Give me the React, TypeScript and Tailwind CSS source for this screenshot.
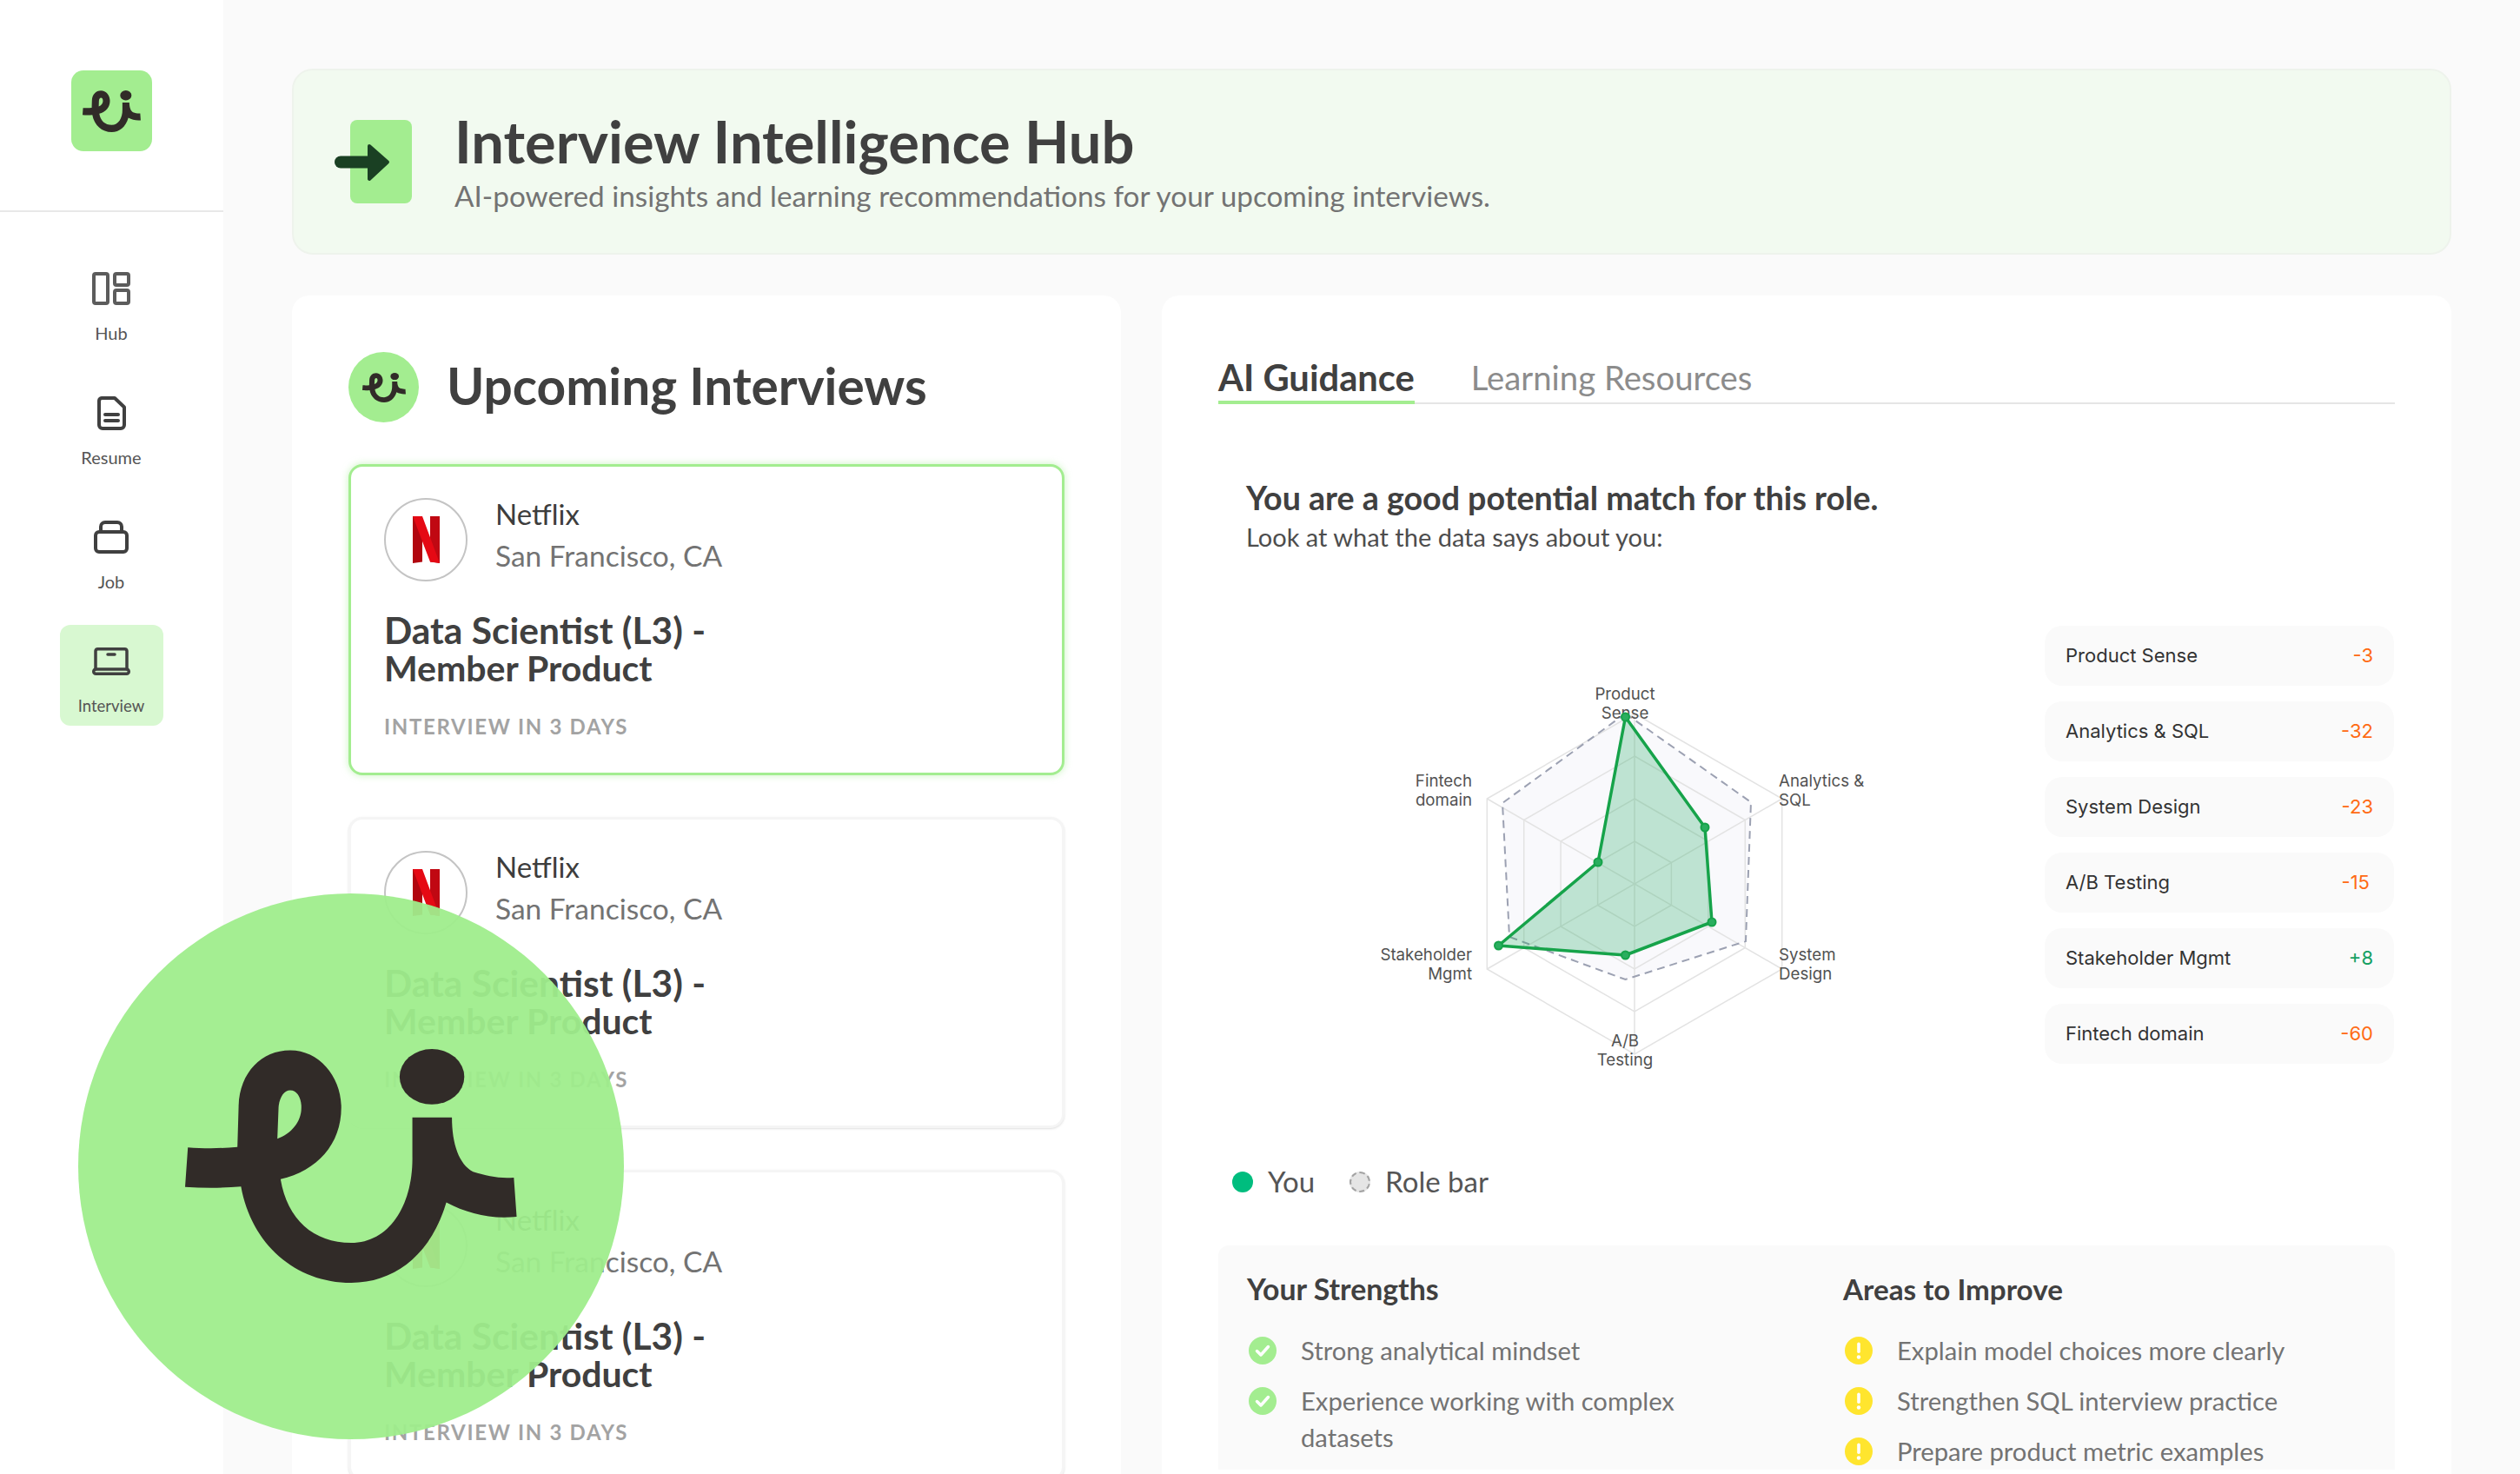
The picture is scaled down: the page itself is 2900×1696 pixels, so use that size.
import React from "react";

const LOGO_BODY =
  "M341 768C380 771 425 771 465 767L468 668C470 585 525 530 597 530C670 530 725 595 725 670C725 760 665 825 573 846C590 945 655 1002 750 1002C845 1002 905 910 903 790L903 695L1002 695C1002 760 1020 810 1055 828C1090 838 1120 845 1157 842L1164 938C1100 945 1040 930 988 903C950 1030 860 1100 750 1100C610 1100 500 1005 474 864C430 868 380 868 334 865ZM565 747C600 735 625 705 625 672C626 648 615 628 597 628C582 628 570 645 568 670Z";

function Logo({ className }: { className: string }) {
  return (
    <svg viewBox="334 527 831 573" preserveAspectRatio="none" className={className}>
      <path d={LOGO_BODY} fill="#312b28" fillRule="evenodd" />
      <ellipse cx="952" cy="595" rx="81" ry="68" fill="#312b28" />
    </svg>
  );
}

function NetflixN() {
  return (
    <svg viewBox="0 0 31 54" className="h-[54px] w-[31px]">
      <path d="M0 0H11V52.5L0 54Z" fill="#b1060f" />
      <path d="M20 0H31V54L20 52.5Z" fill="#c00812" />
      <path d="M0 0H11L31 54C27 53.2 23.5 52.8 20 52.5Z" fill="#e50914" />
    </svg>
  );
}

function HubIcon() {
  return (
    <svg width="44" height="38" viewBox="0 0 44 38" fill="none" stroke="#5c5c5c" strokeWidth="4">
      <rect x="2" y="2" width="16" height="34" rx="2" />
      <rect x="26" y="2" width="16" height="13" rx="2" />
      <rect x="26" y="21" width="16" height="15" rx="2" />
    </svg>
  );
}

function ResumeIcon() {
  return (
    <svg width="33" height="39" viewBox="0 0 33 39" fill="none" stroke="#404040" strokeWidth="4" strokeLinecap="round" strokeLinejoin="round">
      <path d="M5 2H20L31 12.5V33A4 4 0 0 1 27 37H6A4 4 0 0 1 2 33V5A3.5 3.5 0 0 1 5 2Z" />
      <path d="M9 21H24M9 28H24" />
    </svg>
  );
}

function JobIcon() {
  return (
    <svg width="40" height="38" viewBox="0 0 40 38" fill="none" stroke="#404040" strokeWidth="4" strokeLinejoin="round">
      <rect x="2" y="13" width="36" height="23" rx="4" />
      <path d="M8 13V7A5 5 0 0 1 13 2H27A5 5 0 0 1 32 7V13" />
    </svg>
  );
}

function LaptopIcon() {
  return (
    <svg width="44" height="32" viewBox="0 0 44 32" fill="none" stroke="#404040" strokeWidth="3.5" strokeLinejoin="round" strokeLinecap="round">
      <path d="M4 25V4A2.5 2.5 0 0 1 6.5 1.75H37.5A2.5 2.5 0 0 1 40 4V25" />
      <rect x="1.75" y="25" width="40.5" height="5.25" rx="2.5" />
      <path d="M18 8H26" />
    </svg>
  );
}

function NavItem({ label, icon, active }: { label: string; icon: React.ReactNode; active?: boolean }) {
  return (
    <div className={"flex h-[116px] w-[119px] flex-col items-center rounded-xl pt-[18px] " + (active ? "bg-[#d8f8d1]" : "")}>
      <div className="flex h-12 items-center justify-center">{icon}</div>
      <span className={"mt-[13px] leading-7 text-[#555555] " + (active ? "text-[18.5px]" : "text-[20px]")}>{label}</span>
    </div>
  );
}

function InterviewCard({ selected }: { selected?: boolean }) {
  return (
    <div
      className={
        "flex h-[358px] shrink-0 flex-col rounded-[16px] bg-white px-[38px] pt-[36px] " +
        (selected ? "border-[3px] border-[#a3ed90] shadow-[0_0_8px_rgba(165,237,150,0.6)]" : "border-[3px] border-[#f5f5f5] shadow-sm")
      }
    >
      <div className="flex items-center gap-[32px]">
        <div className="flex h-[96px] w-[96px] shrink-0 items-center justify-center rounded-full border-2 border-[#c4c4c4]">
          <NetflixN />
        </div>
        <div className="-mt-[12px]">
          <div className="text-[33px] leading-[48px] text-[#3d3d3d]">Netflix</div>
          <div className="text-[33.5px] leading-[48px] text-[#737373]">San Francisco, CA</div>
        </div>
      </div>
      <div className="mt-[34px] font-bold leading-[44px] text-[#404040]">
        <div className="text-[42.5px]">Data Scientist (L3) -</div>
        <div className="text-[41px]">Member Product</div>
      </div>
      <div className="mt-[29px] text-[24px] font-bold leading-8 tracking-[0.07em] text-[#a3a3a3]">INTERVIEW IN 3 DAYS</div>
    </div>
  );
}

const CX = 1881;
const CY = 1017;
const RADII = [49, 98, 147, 196];

function ringPoints(r: number) {
  return [0, 1, 2, 3, 4, 5]
    .map((i) => {
      const a = ((-90 + 60 * i) * Math.PI) / 180;
      return `${(CX + r * Math.cos(a)).toFixed(1)},${(CY + r * Math.sin(a)).toFixed(1)}`;
    })
    .join(" ");
}

const YOU = [
  [1870.5, 825],
  [1962, 952],
  [1970, 1061],
  [1870.5, 1099],
  [1724.5, 1088],
  [1839, 992],
];
const ROLE = "1870.5,821 2015,923 2009,1083 1870.5,1127 1737,1078 1729,924";

const AXIS_LABELS: { x: number; y: number; anchor: "start" | "middle" | "end"; lines: string[] }[] = [
  { x: 1870, y: 798, anchor: "middle", lines: ["Product", "Sense"] },
  { x: 2047, y: 898, anchor: "start", lines: ["Analytics &", "SQL"] },
  { x: 2047, y: 1098, anchor: "start", lines: ["System", "Design"] },
  { x: 1870, y: 1197, anchor: "middle", lines: ["A/B", "Testing"] },
  { x: 1694, y: 1098, anchor: "end", lines: ["Stakeholder", "Mgmt"] },
  { x: 1694, y: 898, anchor: "end", lines: ["Fintech", "domain"] },
];

function RadarChart() {
  return (
    <svg viewBox="1402 719 951 540" className="h-[540px] w-[951px] shrink-0">
      <polygon points={ROLE} fill="#f9f9fc" />
      {RADII.map((r) => (
        <polygon key={r} points={ringPoints(r)} fill="none" stroke="#e3e3e3" strokeWidth="1.5" />
      ))}
      {[0, 1, 2].map((i) => {
        const a = ((-90 + 60 * i) * Math.PI) / 180;
        return (
          <line
            key={i}
            x1={CX - 196 * Math.cos(a)}
            y1={CY - 196 * Math.sin(a)}
            x2={CX + 196 * Math.cos(a)}
            y2={CY + 196 * Math.sin(a)}
            stroke="#e3e3e3"
            strokeWidth="1.5"
          />
        );
      })}
      <polygon points={ROLE} fill="none" stroke="#9ca1b2" strokeWidth="2" strokeDasharray="9 6" />
      {AXIS_LABELS.map((l) =>
        l.lines.map((t, i) => (
          <text
            key={t}
            x={l.x}
            y={l.y + i * 22 + 7}
            textAnchor={l.anchor}
            fontSize="18.7"
            fill="#525252"
            fontFamily="Inter, sans-serif"
          >
            {t}
          </text>
        )),
      )}
      <polygon points={YOU.map((p) => p.join(",")).join(" ")} fill="#10a555" fillOpacity="0.25" stroke="#16a34a" strokeWidth="3.5" strokeLinejoin="round" />
      {YOU.map((p) => (
        <circle key={p[0] + "-" + p[1]} cx={p[0]} cy={p[1]} r="4.5" fill="#2aae5f" stroke="#16a34a" strokeWidth="2" />
      ))}
    </svg>
  );
}

const METRICS = [
  { name: "Product Sense", value: "-3", color: "text-[#ff6a13]", extra: "" },
  { name: "Analytics & SQL", value: "-32", color: "text-[#ff6a13]", extra: "" },
  { name: "System Design", value: "-23", color: "text-[#ff6a13]", extra: "" },
  { name: "A/B Testing", value: "-15", color: "text-[#ff6a13]", extra: "pr-[4px]" },
  { name: "Stakeholder Mgmt", value: "+8", color: "text-[#16a063]", extra: "" },
  { name: "Fintech domain", value: "-60", color: "text-[#ff6a13]", extra: "" },
];

function CheckIcon() {
  return (
    <svg width="32" height="32" viewBox="0 0 32 32" className="shrink-0">
      <circle cx="16" cy="16" r="16" fill="#a3ed90" />
      <path d="M9.5 16.5L14 21L22.5 11.5" fill="none" stroke="#ffffff" strokeWidth="3.5" strokeLinecap="round" strokeLinejoin="round" />
    </svg>
  );
}

function WarnIcon() {
  return (
    <svg width="32" height="32" viewBox="0 0 32 32" className="shrink-0">
      <circle cx="16" cy="16" r="16" fill="#ffe52e" />
      <rect x="14.2" y="6.5" width="3.6" height="12.5" rx="1.8" fill="#ffffff" />
      <circle cx="16" cy="23.5" r="2.2" fill="#ffffff" />
    </svg>
  );
}

function ListItem({ icon, text }: { icon: React.ReactNode; text: string }) {
  return (
    <div className="flex gap-[28px]">
      <div className="flex h-[42px] items-center">{icon}</div>
      <span className="max-w-[480px] text-[29.2px] leading-[42px] text-[#737373]">{text}</span>
    </div>
  );
}

export default function App() {
  return (
    <div className="relative flex h-[1696px] w-[2900px] overflow-hidden bg-[#fafafa] font-['Lato',sans-serif]">
      <aside className="flex w-[257px] shrink-0 flex-col bg-white">
        <div className="flex h-[244px] items-start justify-center border-b-2 border-[#e8e8e8] pt-[81px]">
          <div className="flex h-[93px] w-[93px] items-center justify-center rounded-[14px] bg-[#a3ed90]">
            <Logo className="h-[48px] w-[67px]" />
          </div>
        </div>
        <nav className="flex flex-col items-center gap-[27px] pr-[1px] pt-[46px]">
          <NavItem label="Hub" icon={<HubIcon />} />
          <NavItem label="Resume" icon={<ResumeIcon />} />
          <NavItem label="Job" icon={<JobIcon />} />
          <NavItem label="Interview" icon={<LaptopIcon />} active />
        </nav>
      </aside>

      <main className="flex min-w-0 flex-1 flex-col px-[79px] pt-[79px]">
        <header className="flex h-[214px] shrink-0 items-center rounded-[24px] border-2 border-[#eef3ec] bg-[#f2faf0] pl-[65px]">
          <div className="relative h-[96px] w-[71px] rounded-[8px] bg-[#a3ed90]">
            <svg width="64" height="44" viewBox="0 0 64 44" className="absolute left-[-18px] top-[27px]">
              <path d="M7 21.5H40" stroke="#1a4023" strokeWidth="14" strokeLinecap="round" />
              <path d="M40 3L61 21.5L40 41Z" fill="#1a4023" stroke="#1a4023" strokeWidth="4" strokeLinejoin="round" />
            </svg>
          </div>
          <div className="ml-[49px] mb-[2px]">
            <h1 className="text-[66.8px] font-bold leading-[76px] text-[#404040]">Interview Intelligence Hub</h1>
            <p className="mt-[4px] text-[33.3px] leading-[42px] text-[#737373]">AI-powered insights and learning recommendations for your upcoming interviews.</p>
          </div>
        </header>

        <div className="mt-[47px] flex min-h-0 flex-1 gap-[47px]">
          <section className="flex w-[954px] shrink-0 flex-col rounded-t-[20px] bg-white px-[65px] pt-[65px]">
            <div className="flex items-center gap-[32px]">
              <div className="flex h-[81px] w-[81px] items-center justify-center rounded-full bg-[#a3ed90]">
                <Logo className="h-[34px] w-[50px]" />
              </div>
              <h2 className="mb-[5px] text-[58.6px] font-bold leading-[76px] text-[#404040]">Upcoming Interviews</h2>
            </div>
            <div className="mt-[48px] flex flex-col gap-[48px]">
              <InterviewCard selected />
              <InterviewCard />
              <InterviewCard />
            </div>
          </section>

          <section className="flex min-w-0 flex-1 flex-col rounded-t-[20px] bg-white px-[65px] pt-[65px]">
            <div className="flex h-[60px] shrink-0 gap-[65px] border-b-2 border-[#e5e5e5]">
              <div className="-mb-[2px] h-[60px] border-b-4 border-[#a3ed90] text-[41.7px] font-bold leading-[58px] text-[#404040]">AI Guidance</div>
              <div className="text-[38.3px] leading-[58px] text-[#8c8c8c]">Learning Resources</div>
            </div>

            <div className="mt-[86px] pl-[32px]">
              <h3 className="text-[37.6px] font-bold leading-[44px] text-[#404040]">You are a good potential match for this role.</h3>
              <p className="mt-[3px] text-[29px] leading-[40px] text-[#4d4d4d]">Look at what the data says about you:</p>
            </div>

            <div className="mt-[81px] flex h-[540px] shrink-0">
              <RadarChart />
              <div className="flex w-[402px] shrink-0 flex-col gap-[18px] pt-[1px] font-['Inter',sans-serif]">
                {METRICS.map((m) => (
                  <div key={m.name} className="flex h-[69px] items-center justify-between rounded-[20px] bg-[#fafafa] px-[24px] text-[22px]">
                    <span className="text-[#333333]">{m.name}</span>
                    <span className={m.color + " " + m.extra}>{m.value}</span>
                  </div>
                ))}
              </div>
            </div>

            <div className="mt-[77px] flex h-[48px] shrink-0 items-center pl-[16px] text-[33px] text-[#555555]">
              <span className="h-[24px] w-[24px] rounded-full bg-[#00bd7e]" />
              <span className="ml-[17px]">You</span>
              <span className="ml-[40px] h-[24px] w-[24px] rounded-full border-2 border-dashed border-[#a3a3a3] bg-[#e5e5e5]" />
              <span className="ml-[17px]">Role bar</span>
            </div>

            <div className="mt-[49px] grid grid-cols-[601px_601px] gap-x-[85px] rounded-t-[12px] bg-[#fafafa] px-[33px] pt-[26px]">
              <div>
                <h4 className="text-[33.8px] font-bold leading-[48px] text-[#404040]">Your Strengths</h4>
                <div className="mt-[26px] flex flex-col gap-[16px] pl-[2px]">
                  <ListItem icon={<CheckIcon />} text="Strong analytical mindset" />
                  <ListItem icon={<CheckIcon />} text="Experience working with complex datasets" />
                </div>
              </div>
              <div>
                <h4 className="text-[33.2px] font-bold leading-[48px] text-[#404040]">Areas to Improve</h4>
                <div className="mt-[26px] flex flex-col gap-[16px] pl-[2px]">
                  <ListItem icon={<WarnIcon />} text="Explain model choices more clearly" />
                  <ListItem icon={<WarnIcon />} text="Strengthen SQL interview practice" />
                  <ListItem icon={<WarnIcon />} text="Prepare product metric examples" />
                </div>
              </div>
            </div>
          </section>
        </div>
      </main>

      <div className="absolute left-[90px] top-[1028px] h-[628px] w-[628px] rounded-full bg-[#9fed8c]/95">
        <Logo className="absolute left-[123px] top-[179px] h-[269px] w-[382px]" />
      </div>
    </div>
  );
}
